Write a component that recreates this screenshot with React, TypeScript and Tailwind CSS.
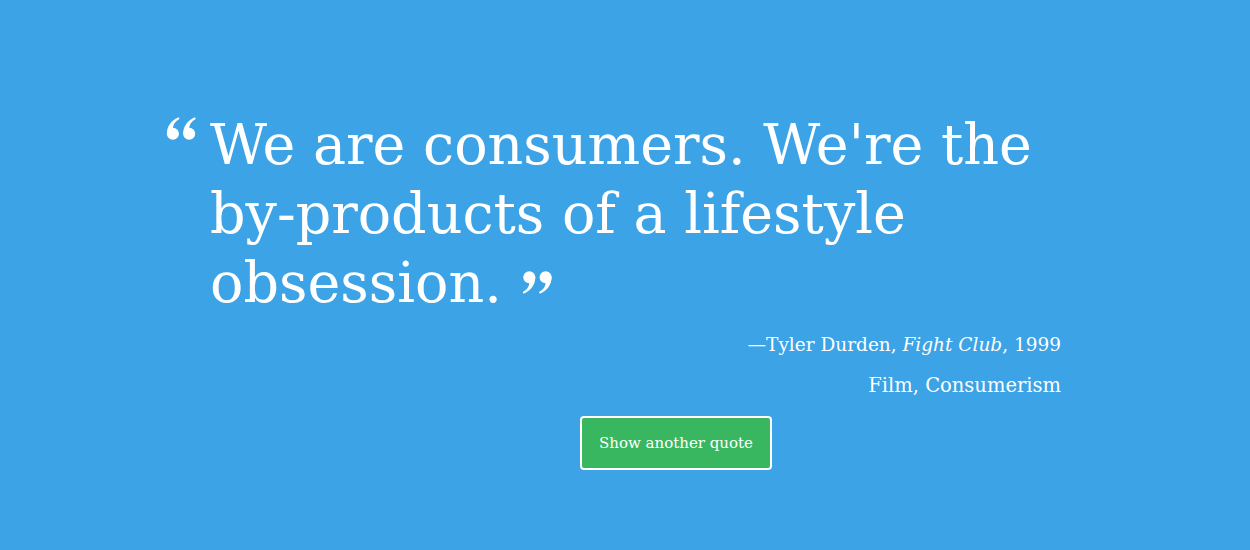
function QuoteMark({ className }: { className?: string }) {
  return (
    <svg viewBox="0 0 31 24" className={className} fill="currentColor">
      <circle cx="6.5" cy="17.5" r="6.3" />
      <path d="M0.3 17.5C0.3 9.5 5 3.2 12.6 0.3L13.4 2C8.6 4.6 6.6 8.2 6.6 12Z" />
      <circle cx="23.5" cy="17.5" r="6.3" />
      <path d="M17.3 17.5C17.3 9.5 22 3.2 29.6 0.3L30.4 2C25.6 4.6 23.6 8.2 23.6 12Z" />
    </svg>
  );
}

export default function App() {
  return (
    <div className="h-[550px] w-full bg-[#3ca3e6] text-white [font-family:'DejaVu_Serif',serif]">
      <div className="pt-[110px] pl-[166px] w-[1061px]">
        <div className="flex">
          <div className="w-[44px] shrink-0 pt-[7px]">
            <QuoteMark className="h-[23px] w-[31px]" />
          </div>
          <p className="text-[55.5px] leading-[69px]">
            We are consumers. We're the by-products of a lifestyle obsession.
            <QuoteMark className="ml-5 inline-block h-[23px] w-[30px] rotate-180 align-[8px]" />
          </p>
        </div>
        <p className="mt-[13px] text-right text-[18.5px] leading-[30px]">
          —Tyler Durden, <i>Fight Club</i>, 1999
        </p>
        <p className="mt-[11px] text-right text-[19.5px] leading-[30px]">Film, Consumerism</p>
        <div className="mt-[15px] pl-[414px]">
          <button className="h-[54px] w-[192px] rounded border-2 border-white bg-[#38b760] text-[15px]">
            Show another quote
          </button>
        </div>
      </div>
    </div>
  );
}
